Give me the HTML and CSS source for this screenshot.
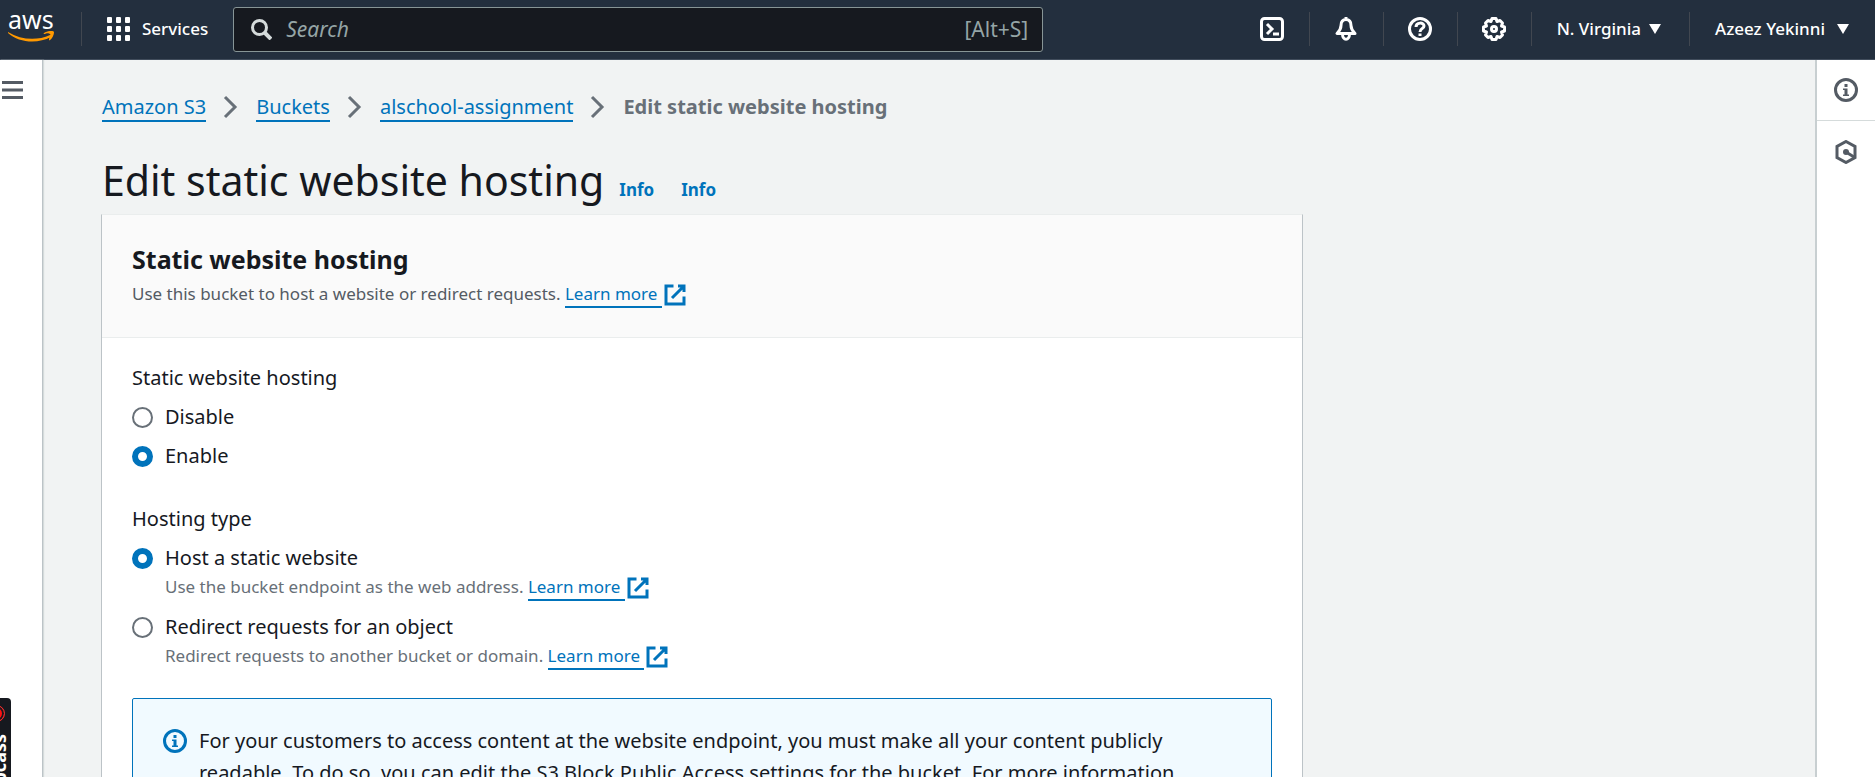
FILE: index.html
```html
<!DOCTYPE html>
<html lang="en">
<head>
<meta charset="utf-8">
<title>Edit static website hosting</title>
<link rel="stylesheet" href="styles.css">
</head>
<body>
<svg class="defs" aria-hidden="true">
  <symbol id="external" viewBox="0 0 16 16"><path d="M10 2h4v4M6 10l8-8M14 9v5H2V2h5" fill="none" stroke="currentColor" stroke-width="2"/></symbol>
  <symbol id="chevron" viewBox="0 0 16 24"><path d="M2 2l10 10L2 22" fill="none" stroke="currentColor" stroke-width="3"/></symbol>
  <symbol id="info" viewBox="0 0 16 16"><circle cx="8" cy="8" r="7" fill="none" stroke="currentColor" stroke-width="2"/><path d="M7 4h2v2H7zM6 7h3v4h1v1H6v-1h1V8H6z" fill="currentColor"/></symbol>
</svg>
<header class="topbar">
  <a class="logo" href="#" aria-label="AWS home">
    <span class="logo-text">aws</span>
    <svg class="logo-smile" viewBox="0 0 46 11"><path d="M0 1c13 8 29 9 42 3 2-1 3 1 1 2C30 13 11 12 0 2c-1-1-1-2 0-1zM36 2c3-2 9-3 10-1 0 3-2 7-4 8-1 1-1 0-1-1 1-2 2-4 1-5s-4-1-5 0c-1 0-2 0-1-1z" fill="#f90"/></svg>
  </a>
  <button class="services" type="button">
    <svg viewBox="0 0 23 24" width="23" height="24" fill="currentColor"><rect width="5" height="6" rx="1"/><rect x="9" width="5" height="6" rx="1"/><rect x="18" width="5" height="6" rx="1"/><rect y="9" width="5" height="6" rx="1"/><rect x="9" y="9" width="5" height="6" rx="1"/><rect x="18" y="9" width="5" height="6" rx="1"/><rect y="18" width="5" height="6" rx="1"/><rect x="9" y="18" width="5" height="6" rx="1"/><rect x="18" y="18" width="5" height="6" rx="1"/></svg>
    Services
  </button>
  <label class="search">
    <svg viewBox="0 0 21 21" width="21" height="21" fill="none" stroke="currentColor"><circle cx="8.500" cy="8.500" r="7" stroke-width="3"/><path d="M13 13l7 7" stroke-width="4"/></svg>
    <input type="search" placeholder="Search" aria-label="Search">
    <span class="shortcut">[Alt+S]</span>
  </label>
  <nav class="tools" aria-label="Tools">
    <button class="tool" type="button" aria-label="CloudShell"><svg viewBox="0 0 24 24"><rect x="1.500" y="1.500" width="21" height="21" rx="3"/><path d="M7 7l5 5-5 5M13 17h6"/></svg></button>
    <button class="tool" type="button" aria-label="Notifications"><svg viewBox="0 0 24 24"><path d="M12 2.500c-3 0-5 2-5 6 0 4-2 6-4 8h18c-2-2-4-4-4-8 0-4-2-6-5-6zM12 0v3M8.500 17c0 7 7 7 7 0" stroke-linejoin="round"/></svg></button>
    <button class="tool" type="button" aria-label="Help"><svg viewBox="0 0 24 24"><circle cx="12" cy="12" r="10.500"/><path d="M8 10c0-5 8-5 8-1 0 3-4 2-4 6M12 16.500v2.500"/></svg></button>
    <button class="tool" type="button" aria-label="Settings"><svg viewBox="0 0 24 24"><path d="M10 1.500h4l1 3 3-1 2.500 2.500-1 3 3 1v4l-3 1 1 3-2.500 2.500-3-1-1 3h-4l-1-3-3 1L3.500 18l1-3-3-1v-4l3-1-1-3L6 3.500l3 1z" stroke-linejoin="round"/><circle cx="12" cy="12" r="2.500"/></svg></button>
    <button class="menu" type="button">N. Virginia <svg viewBox="0 0 12 10" width="12" height="10"><path d="M0 0h12L6 10z" fill="currentColor"/></svg></button>
    <button class="menu" type="button">Azeez Yekinni <svg viewBox="0 0 12 10" width="12" height="10"><path d="M0 0h12L6 10z" fill="currentColor"/></svg></button>
  </nav>
</header>
<div class="shell">
  <aside class="rail-left">
    <button type="button" class="burger" aria-label="Open navigation"><svg viewBox="0 0 21 18" width="21" height="18"><path d="M0 1.500h21M0 9h21M0 16.500h21" stroke="currentColor" stroke-width="3"/></svg></button>
    <div class="recorder"><span class="rec-dot"></span><span class="rec-text">bcass</span></div>
  </aside>
  <main class="content">
    <nav class="crumbs" aria-label="Breadcrumb">
      <a href="#">Amazon S3</a><svg><use href="#chevron"/></svg>
      <a href="#">Buckets</a><svg><use href="#chevron"/></svg>
      <a href="#">alschool-assignment</a><svg><use href="#chevron"/></svg>
      <span>Edit static website hosting</span>
    </nav>
    <div class="heading">
      <h1>Edit static website hosting</h1>
      <a href="#">Info</a>
      <a href="#">Info</a>
    </div>
    <section class="card">
      <div class="card-head">
        <h2>Static website hosting</h2>
        <p class="hint">Use this bucket to host a website or redirect requests. <a class="more" href="#"><span>Learn more </span><svg><use href="#external"/></svg></a></p>
      </div>
      <div class="card-body">
        <fieldset>
          <legend>Static website hosting</legend>
          <div class="option"><input type="radio" name="hosting" id="off"><label for="off">Disable</label></div>
          <div class="option"><input type="radio" name="hosting" id="on" checked><label for="on">Enable</label></div>
        </fieldset>
        <fieldset>
          <legend>Hosting type</legend>
          <div class="option"><input type="radio" name="type" id="host" checked><label for="host">Host a static website</label>
            <p class="hint">Use the bucket endpoint as the web address. <a class="more" href="#"><span>Learn more </span><svg><use href="#external"/></svg></a></p></div>
          <div class="option"><input type="radio" name="type" id="redirect"><label for="redirect">Redirect requests for an object</label>
            <p class="hint">Redirect requests to another bucket or domain. <a class="more" href="#"><span>Learn more </span><svg><use href="#external"/></svg></a></p></div>
        </fieldset>
        <div class="alert">
          <svg><use href="#info"/></svg>
          <p>For your customers to access content at the website endpoint, you must make all your content publicly readable. To do so, you can edit the S3 Block Public Access settings for the bucket. For more information</p>
        </div>
      </div>
    </section>
  </main>
  <aside class="rail-right">
    <button type="button" aria-label="Info panel"><svg><use href="#info"/></svg></button>
    <button type="button" aria-label="Tutorials"><svg viewBox="0 0 24 24"><path d="M12 1.500l9 5v11l-9 5-9-5v-11z" fill="none" stroke="currentColor" stroke-width="3"/><circle cx="12" cy="12" r="3" fill="currentColor"/><path d="M12 12l8 5" stroke="currentColor" stroke-width="3"/></svg></button>
  </aside>
</div>
</body>
</html>
```
FILE: styles.css
```css
* { box-sizing: border-box; }
body {
  margin: 0;
  height: 100vh;
  overflow: hidden;
  display: flex;
  flex-direction: column;
  font: 20px/32px "Noto Sans", "Open Sans", sans-serif;
  color: #16191f;
  background: #f1f3f3;
}
h1, h2, p { margin: 0; }
button { font: inherit; color: inherit; background: none; border: 0; padding: 0; }
a { color: #0073bb; text-decoration: none; }
svg { flex: none; }
.defs { display: none; }

.topbar {
  flex: none;
  display: flex;
  align-items: center;
  height: 60px;
  padding-bottom: 1px;
  background: #232f3e;
  border-bottom: 1px solid #414d5c;
  color: #fff;
  font-size: 17px;
}
.logo {
  display: flex;
  flex-direction: column;
  width: 82px;
  height: 34px;
  padding-left: 8px;
  border-right: 1px solid #414750;
  color: #fff;
}
.logo-text { font-size: 25px; line-height: 14px; }
.logo-smile { width: 46px; height: 11px; margin-top: 5px; }
.services { display: flex; align-items: center; gap: 12px; padding: 0 25px; font-weight: 500; }
.search {
  display: flex;
  align-items: center;
  width: 810px;
  height: 45px;
  padding: 0 14px 0 17px;
  background: #16191f;
  border: 1px solid #879596;
  border-radius: 3px;
  color: #d5dbdb;
}
.search input {
  flex: 1;
  min-width: 0;
  margin-left: 14px;
  border: 0;
  padding: 0;
  background: none;
  font: italic 21px/32px "Noto Sans", sans-serif;
  color: #fff;
}
.search input::placeholder { color: #95a5a6; opacity: 1; }
.shortcut { font-size: 21px; color: #95a5a6; }
.tools { display: flex; margin-left: auto; }
.tool, .menu { display: flex; align-items: center; justify-content: center; height: 34px; border-right: 1px solid #414750; }
.tool { width: 74px; }
.tool svg { width: 24px; height: 24px; fill: none; stroke: currentColor; stroke-width: 3; }
.menu { gap: 8px; padding: 0 28px 0 25px; font-weight: 500; }
.menu:last-child { gap: 12px; border: 0; padding-right: 26px; }

.shell { flex: 1; min-height: 0; display: flex; }
.rail-left {
  flex: none;
  display: flex;
  flex-direction: column;
  justify-content: space-between;
  width: 43px;
  background: #fff;
  border-right: 1px solid #bcc3c7;
  box-shadow: 1px 0 1px #d5dbdb;
  color: #545b64;
}
.burger { display: flex; padding: 21px 2px; }
.recorder {
  display: flex;
  flex-direction: column;
  align-items: flex-end;
  gap: 12px;
  width: 11px;
  height: 79px;
  padding-top: 7px;
  border-radius: 0 4px 0 0;
  background: #16191f;
  overflow: hidden;
}
.rec-dot { flex: none; width: 17px; height: 17px; margin-right: 6px; border: 1px solid #e33; border-radius: 50%; background: #f11; box-shadow: inset 0 0 0 2px #16191f; }
.rec-text { writing-mode: vertical-rl; transform: rotate(180deg); margin-right: 3px; font-weight: 700; font-size: 18px; line-height: 18px; color: #fff; }

.content { flex: 1; min-width: 0; padding: 31px 59px 0 58px; }
.crumbs { display: flex; align-items: center; gap: 17px; height: 32px; padding-left: 1px; }
.crumbs a { line-height: 26px; border-top: 2px solid transparent; border-bottom: 2px solid #0073bb; }
.crumbs svg { width: 16px; height: 24px; color: #687078; }
.crumbs span { font-weight: 700; color: #687078; }
.heading { display: flex; align-items: baseline; height: 91px; padding: 30px 0 0 1px; }
.heading h1 { font-size: 41px; line-height: 54px; font-weight: 400; }
.heading a { margin-left: 15px; font-size: 17px; font-weight: 700; }
.heading a + a { margin-left: 27px; }
.card {
  max-width: 1202px;
  background: #fff;
  border: 1px solid #bcc3c7;
  border-top-color: #eaeded;
}
.card-head { padding: 26px 30px; background: #fafafa; border-bottom: 1px solid #eaeded; }
.card-head h2 { font-size: 25px; line-height: 36px; }
.card-head .hint { line-height: 34px; color: #545b64; }
.card-body { padding: 24px 30px; }
.hint { font-size: 17px; line-height: 26px; color: #687078; }
.more { display: inline-flex; align-items: center; gap: 1px; line-height: 24px; }
.more span { white-space: pre; border-bottom: 2px solid #0073bb; }
.more svg { width: 24px; height: 24px; }
fieldset { margin: 0; padding: 0; border: 0; }
fieldset + fieldset { margin-top: 31px; }
legend { padding: 0; }
.option { display: grid; grid-template-columns: 22px 1fr; column-gap: 11px; align-items: center; margin-top: 7px; }
.option .hint { grid-column: 2; padding-bottom: 3px; }
.option input {
  appearance: none;
  width: 21px;
  height: 21px;
  margin: 0;
  border: 2px solid #687078;
  border-radius: 50%;
  background: #fff;
}
.option input:checked { border: 6px solid #0073bb; }
.alert { display: flex; gap: 12px; margin-top: 25px; padding: 26px 30px; background: #f1faff; border: 1px solid #0073bb; border-radius: 2px; }
.alert svg { width: 24px; height: 24px; margin-top: 4px; color: #0073bb; }

.rail-right { flex: none; width: 60px; background: #fff; border-left: 2px solid #c8cfd1; color: #545b64; }
.rail-right button { display: flex; align-items: center; justify-content: center; width: 100%; height: 61px; border-bottom: 1px solid #d5dbdb; }
.rail-right button:last-child { border: 0; }
.rail-right svg { width: 24px; height: 24px; }
```
